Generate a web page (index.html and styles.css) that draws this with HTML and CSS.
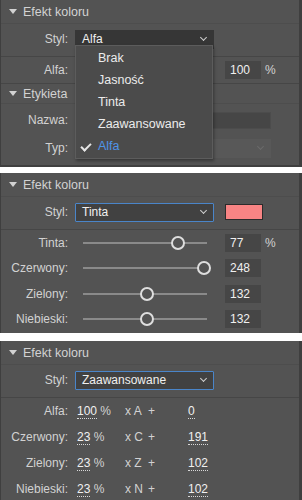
FILE: index.html
```html
<!DOCTYPE html>
<html lang="pl">

<head>
    <meta charset="UTF-8">
    <meta name="viewport" content="width=device-width, initial-scale=1.0">
    <title>Efekt koloru</title>
    <link rel="stylesheet" href="styles.css">
</head>

<body>
    <!-- panel 1: otwarta lista stylów -->
    <div class="panel panel-1">
        <div class="head"><span class="tri"></span>Efekt koloru</div>
        <div class="row row-styl">
            <span class="label">Styl:</span>
            <div class="select select-open">Alfa<span class="chev"></span></div>
        </div>
        <div class="row row-val">
            <span class="label">Alfa:</span>
            <span></span>
            <span class="num">100</span>
            <span class="unit">%</span>
        </div>
        <div class="head head-2"><span class="tri"></span>Etykieta</div>
        <div class="row row-name">
            <span class="label">Nazwa:</span>
            <div class="text-input"></div>
        </div>
        <div class="row row-typ">
            <span class="label">Typ:</span>
            <div class="select select-disabled"><span class="chev"></span></div>
        </div>

        <ul class="menu">
            <li>Brak</li>
            <li>Jasność</li>
            <li>Tinta</li>
            <li>Zaawansowane</li>
            <li class="checked">Alfa</li>
        </ul>
    </div>

    <!-- panel 2: tinta -->
    <div class="panel panel-2">
        <div class="head"><span class="tri"></span>Efekt koloru</div>
        <div class="row row-styl">
            <span class="label">Styl:</span>
            <div class="select select-focus">Tinta<span class="chev"></span></div>
            <span></span>
            <span class="swatch"></span>
        </div>
        <div class="row row-val">
            <span class="label">Tinta:</span>
            <div class="slider"><span class="thumb" style="left: 77%"></span></div>
            <span class="num">77</span>
            <span class="unit">%</span>
        </div>
        <div class="row row-val">
            <span class="label">Czerwony:</span>
            <div class="slider"><span class="thumb" style="left: 97.3%"></span></div>
            <span class="num">248</span>
        </div>
        <div class="row row-val">
            <span class="label">Zielony:</span>
            <div class="slider"><span class="thumb" style="left: 51.8%"></span></div>
            <span class="num">132</span>
        </div>
        <div class="row row-val">
            <span class="label">Niebieski:</span>
            <div class="slider"><span class="thumb" style="left: 51.8%"></span></div>
            <span class="num">132</span>
        </div>
    </div>

    <!-- panel 3: zaawansowane -->
    <div class="panel panel-3">
        <div class="head"><span class="tri"></span>Efekt koloru</div>
        <div class="row row-styl">
            <span class="label">Styl:</span>
            <div class="select select-focus">Zaawansowane<span class="chev"></span></div>
        </div>
        <div class="row row-adv">
            <span class="label">Alfa:</span>
            <span class="pct"><u>100</u> %</span>
            <span class="mul">x A</span>
            <span class="plus">+</span>
            <span class="off"><u>0</u></span>
        </div>
        <div class="row row-adv">
            <span class="label">Czerwony:</span>
            <span class="pct"><u>23</u> %</span>
            <span class="mul">x C</span>
            <span class="plus">+</span>
            <span class="off"><u>191</u></span>
        </div>
        <div class="row row-adv">
            <span class="label">Zielony:</span>
            <span class="pct"><u>23</u> %</span>
            <span class="mul">x Z</span>
            <span class="plus">+</span>
            <span class="off"><u>102</u></span>
        </div>
        <div class="row row-adv">
            <span class="label">Niebieski:</span>
            <span class="pct"><u>23</u> %</span>
            <span class="mul">x N</span>
            <span class="plus">+</span>
            <span class="off"><u>102</u></span>
        </div>
    </div>
</body>

</html>
```

FILE: styles.css
```css
body {
    margin: 0;
    background: #fff;
    font-family: "Liberation Sans", Arial, sans-serif;
    font-size: 12px;
    color: #d2d2d2;
}

.panel {
    position: relative;
    width: 298px;
    background-color: #535353;
    border-left: 1px solid #3f3f3f;
    border-right: 3px solid #3f3f3f;
}

.panel-1 {
    height: 165px;
    border-bottom: 2px solid #3f3f3f;
}

.panel-2 {
    margin-top: 6px;
    height: 160px;
}

.panel-3 {
    margin-top: 8px;
    height: 159px;
}

.head {
    display: flex;
    align-items: center;
    height: 23px;
    padding-left: 8px;
    font-size: 12.5px;
    border-bottom: 1px solid #4d4d4d;
}

.head-2 {
    height: 19px;
}

.tri {
    width: 0;
    height: 0;
    margin-right: 6px;
    border-left: 4px solid transparent;
    border-right: 4px solid transparent;
    border-top: 5px solid #d2d2d2;
}

.row {
    display: grid;
    grid-template-columns: 74px 139px 11px 36px auto;
    align-items: center;
}

.label {
    grid-column: 1;
    text-align: right;
    padding-right: 7px;
}

.row-styl {
    height: 30px;
    padding-bottom: 2px;
    border-bottom: 1px solid #464646;
}

.row-val {
    height: 25.5px;
}

.panel-1 .row-val {
    height: 26px;
    border-bottom: 1px solid #464646;
}

.row-name {
    height: 26px;
    padding-top: 3px;
    grid-template-columns: 74px 196px;
}

.row-typ {
    height: 30px;
    grid-template-columns: 74px 196px;
}

.select {
    position: relative;
    box-sizing: border-box;
    height: 19px;
    line-height: 17px;
    padding-left: 6px;
    font-size: 12px;
    color: #f0f0f0;
    background: #3e3e3e;
    border: 1px solid #3e3e3e;
}

.select-open {
    background: #363636;
    border-color: #363636;
}

.select-focus {
    background: #414141;
    border-color: #4a85c9;
    border-radius: 1px;
}

.select-disabled {
    background: #585858;
    border-color: #585858;
}

.chev {
    position: absolute;
    right: 7px;
    top: 4px;
    width: 4px;
    height: 4px;
    border-right: 1px solid #cfcfcf;
    border-bottom: 1px solid #cfcfcf;
    transform: rotate(45deg);
}

.select-disabled .chev {
    border-color: #6a6a6a;
}

.text-input {
    height: 17px;
    background: #464646;
    border: 1px solid #4c4c4c;
    box-sizing: border-box;
}

.num {
    grid-column: 4;
    height: 18px;
    line-height: 18px;
    padding-left: 5px;
    background: #464646;
    color: #f0f0f0;
}

.unit {
    grid-column: 5;
    padding-left: 4px;
}

.swatch {
    grid-column: 4;
    width: 36px;
    height: 14px;
    background: #f88484;
    border: 1px solid #2b2b2b;
}

.slider {
    position: relative;
    grid-column: 2;
    height: 2px;
    margin: 0 7px 0 8px;
    background: #8a8a8a;
}

.thumb {
    position: absolute;
    top: -6px;
    width: 10px;
    height: 10px;
    margin-left: -7px;
    border: 2px solid #dedede;
    border-radius: 50%;
    background: #535353;
}

/* lista rozwijana */
.menu {
    position: absolute;
    left: 74px;
    top: 45px;
    width: 136px;
    margin: 0;
    padding: 1px 0;
    list-style: none;
    background: #4b4b4b;
    border: 1px solid #5c5c5c;
    box-shadow: 1px 2px 3px rgba(0, 0, 0, .35);
    font-size: 12.5px;
    color: #ececec;
}

.menu li {
    position: relative;
    height: 22px;
    line-height: 22px;
    padding-left: 22px;
}

.checked {
    color: #4f94e8;
}

.checked::before {
    content: "";
    position: absolute;
    left: 7px;
    top: 6px;
    width: 4px;
    height: 8px;
    border-right: 2px solid #e6e6e6;
    border-bottom: 2px solid #e6e6e6;
    transform: rotate(45deg);
}

/* tryb zaawansowany */
.row-adv {
    height: 26px;
    grid-template-columns: 74px 2px 48px 23px 40px auto;
}

.row-adv .pct {
    grid-column: 3;
}

.row-adv .mul {
    grid-column: 4;
}

.row-adv .plus {
    grid-column: 5;
}

.row-adv .off {
    grid-column: 6;
}

.row-adv u {
    text-decoration: none;
    color: #f0f0f0;
    border-bottom: 1px dotted #d8d8d8;
}
```
